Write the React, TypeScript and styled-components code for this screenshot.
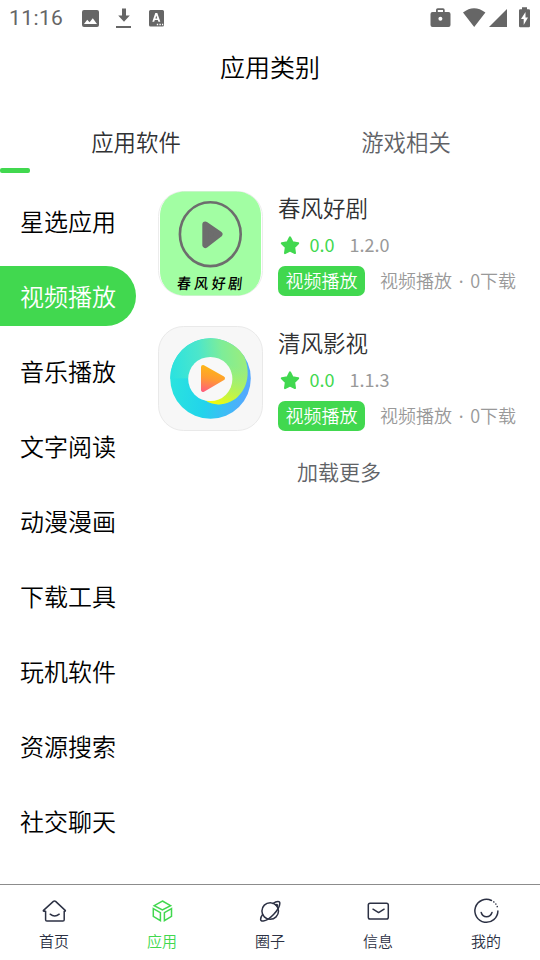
import React from "react";
import styled, { createGlobalStyle } from "styled-components";

const GREEN = "#41d84f";
const INK = "#2c3144";

const GlobalStyle = createGlobalStyle`
  * { box-sizing: border-box; }
  html, body { margin: 0; background: #fff; }
  body { font-family: "Noto Sans CJK SC", sans-serif; font-weight: 350; overflow: hidden; }
`;

const Screen = styled.div`
  width: 540px;
  height: 960px;
  display: flex;
  flex-direction: column;
  background: #fff;
  white-space: nowrap;
`;

const StatusBar = styled.header`
  height: 36px;
  flex: none;
  display: flex;
  align-items: center;
  justify-content: space-between;
  color: #666;
`;

const Clock = styled.span`
  width: 70px;
  padding-left: 9px;
  font: 400 21px/38px Roboto, sans-serif;
  letter-spacing: 0.4px;
`;

const StatusGroup = styled.div`
  display: flex;
  align-items: center;
`;

const StatusGlyphs = styled.svg`
  display: block;
  flex: none;
`;

const Title = styled.h1`
  margin: 0;
  height: 62px;
  flex: none;
  font-size: 25px;
  font-weight: 350;
  line-height: 61px;
  text-align: center;
  color: #000;
`;

const Tabs = styled.nav`
  height: 68px;
  margin-top: 10px;
  flex: none;
  display: grid;
  grid-template-columns: 1fr 1fr;
`;

const Tab = styled.div<{ $active?: boolean }>`
  padding-left: 2px;
  font-size: 22.4px;
  line-height: 67px;
  text-align: center;
  color: ${(p) => (p.$active ? "#303133" : "#606266")};
`;

const TabIndicator = styled.div`
  width: 30px;
  height: 5px;
  margin-top: -8px;
  flex: none;
  border-radius: 2px;
  background: ${GREEN};
`;

const Body = styled.main`
  flex: 1;
  min-height: 0;
  display: flex;
  padding-top: 18px;
`;

const Sidebar = styled.aside`
  width: 136px;
  flex: none;
  display: flex;
  flex-direction: column;
  gap: 15px;
`;

const Category = styled.div<{ $active?: boolean }>`
  height: 60px;
  padding-left: 20px;
  font-size: 24px;
  line-height: 59px;
  border-radius: 0 30px 30px 0;
  color: ${(p) => (p.$active ? "#fff" : "#000")};
  background: ${(p) => (p.$active ? GREEN : "transparent")};
`;

const AppList = styled.section`
  flex: 1;
  display: flex;
  flex-direction: column;
  gap: 30px;
  padding-left: 22px;
`;

const AppRow = styled.article`
  height: 105px;
  display: flex;
  gap: 15px;
`;

const AppIcon = styled.svg`
  width: 105px;
  height: 105px;
  flex: none;
`;

const Caption = styled.text`
  font-family: "Noto Sans CJK SC", sans-serif;
  font-size: 15px;
  font-weight: 500;
`;

const Info = styled.div`
  display: flex;
  flex-direction: column;
`;

const AppName = styled.div`
  height: 34px;
  font-size: 22.5px;
  line-height: 32px;
  color: #303133;
`;

const Rating = styled.div`
  height: 41px;
  display: flex;
  align-items: center;
  font-size: 18px;
  font-weight: 400;
  line-height: 39px;
`;

const Star = styled.svg`
  width: 24px;
  height: 24px;
`;

const Score = styled.span`
  height: 41px;
  margin-left: 7.5px;
  color: ${GREEN};
`;

const Version = styled.span`
  height: 41px;
  margin-left: 15px;
  color: #999;
`;

const Meta = styled.div`
  display: flex;
  align-items: center;
  gap: 15px;
  height: 30px;
  font-size: 18px;
  line-height: 29px;
  color: #999;
`;

const Tag = styled.span`
  height: 30px;
  width: 87px;
  text-align: center;
  border-radius: 7px;
  color: #fff;
  background: ${GREEN};
`;

const Dot = styled.span`
  padding: 0 2px;
  font-family: "Noto Sans", sans-serif;
  font-weight: 400;
`;

const LoadMore = styled.div`
  margin-left: -22px;
  width: 406px;
  height: 24px;
  font-size: 21px;
  line-height: 20px;
  text-align: center;
  color: #606266;
`;

const TabBar = styled.footer`
  height: 76px;
  flex: none;
  display: grid;
  grid-template-columns: repeat(5, 1fr);
  border-top: 1px solid #8c8c8c;
`;

const NavItem = styled.div<{ $active?: boolean }>`
  display: flex;
  flex-direction: column;
  align-items: center;
  padding-top: 11px;
  font-size: 15px;
  line-height: 30px;
  color: ${(p) => (p.$active ? GREEN : INK)};
`;

const NavIcon = styled.svg`
  width: 30px;
  height: 30px;
  fill: none;
  stroke: currentColor;
  stroke-width: 1.5;
  stroke-linecap: round;
  stroke-linejoin: round;
`;

const SpringIcon = () => (
  <AppIcon viewBox="0 0 105 105">
    <rect x="0.5" y="0.5" width="104" height="104" rx="25" fill="#fff" stroke="#ececec" />
    <path d="M27 0.5H78C92 0.5 103 10 103 25V80C103 95 92 104.5 78 104.5H27C13 104.5 2 95 2 80V25C2 10 13 0.5 27 0.5Z" fill="#a2fea3" />
    <ellipse cx="52.3" cy="43.2" rx="30.4" ry="31.9" fill="none" stroke="#6d6d6d" strokeWidth="2.6" />
    <path d="M47.3 33.4 61.5 43.2 47.3 54Z" fill="#6d6d6d" stroke="#6d6d6d" strokeWidth="6" strokeLinejoin="round" />
    <Caption transform="translate(18.5 98) skewX(-6) scale(0.93 1)" x="0 18.5 37.5 55" y="0 0 0 0">春风好剧</Caption>
  </AppIcon>
);

const BreezeIcon = () => (
  <AppIcon viewBox="0 0 105 105">
    <defs>
      <linearGradient id="ring" x1="0" y1="0.5" x2="1" y2="0.65">
        <stop offset="0" stopColor="#2ae4de" />
        <stop offset="0.45" stopColor="#22d4eb" />
        <stop offset="1" stopColor="#58a5ff" />
      </linearGradient>
      <linearGradient id="crest" x1="0" y1="0.6" x2="1" y2="0.5">
        <stop offset="0" stopColor="#2ae2e0" />
        <stop offset="0.4" stopColor="#4ce6cb" />
        <stop offset="0.7" stopColor="#7eed98" />
        <stop offset="1" stopColor="#9bed7c" />
      </linearGradient>
      <linearGradient id="lime" x1="0.6" y1="0" x2="0.3" y2="1">
        <stop offset="0.35" stopColor="#c0f34b" stopOpacity="0" />
        <stop offset="1" stopColor="#f2fb0b" />
      </linearGradient>
      <linearGradient id="play" gradientUnits="userSpaceOnUse" x1="54" y1="39" x2="48" y2="66">
        <stop offset="0" stopColor="#fdbb12" />
        <stop offset="0.5" stopColor="#ff9b32" />
        <stop offset="1" stopColor="#ff607c" />
      </linearGradient>
    </defs>
    <rect x="0.5" y="0.5" width="104" height="104" rx="25" fill="#f7f7f7" stroke="#e9e9e9" />
    <circle cx="52.5" cy="52.5" r="40.3" fill="url(#ring)" />
    <path d="M12.3 52.5A40.3 40.3 0 0 1 86 30C94 48 88 65 77 73C67 80 55 80 47 74L52 52Z" fill="url(#crest)" />
    <path d="M52.5 12.2C67 12.2 80 19 86 30C94 48 88 65 77 73C67 80 55 80 47 74L52 52Z" fill="url(#lime)" />
    <circle cx="52.3" cy="53" r="22.1" fill="#f8f8f8" />
    <path d="M45 41 65 52.2 45 64Z" fill="url(#play)" stroke="url(#play)" strokeWidth="4" strokeLinejoin="round" />
  </AppIcon>
);

const categories = ["星选应用", "视频播放", "音乐播放", "文字阅读", "动漫漫画", "下载工具", "玩机软件", "资源搜索", "社交聊天"];

const apps = [
  { name: "春风好剧", version: "1.2.0", icon: <SpringIcon /> },
  { name: "清风影视", version: "1.1.3", icon: <BreezeIcon /> },
];

const navItems = [
  {
    label: "首页",
    icon: <path d="M6.6 15.2H4.9C4.3 15.2 4.1 14.8 4.5 14.4L14.4 5.4Q15.5 4.5 16.6 5.4L26.2 14.4C26.6 14.8 26.4 15.2 25.8 15.2H25.2V23.8Q25.2 25.1 23.9 25.1H7.9Q6.6 25.1 6.6 23.8V15.2M11.2 18.2Q15.7 21.8 20.2 18.2" />,
  },
  {
    label: "应用",
    icon: <path strokeLinejoin="miter" d="M15.4 5 23.6 9.7 15.4 14 7.2 9.7ZM6.3 12.6 13.4 16.7V24.6L6.3 20.4ZM24.5 12.6 17.4 16.7V24.6L24.5 20.4Z" />,
  },
  {
    label: "圈子",
    icon: (
      <>
        <circle cx="15.2" cy="15" r="8.3" />
        <path d="M18 7.5C21.7 4.7 25.3 4.8 24.8 7.6C24.5 13.5 14.5 24.3 8.3 25C4.4 25.5 5.2 21.8 7.8 18.3M20.8 8.9C21.9 8.3 22.6 8.7 22.4 9.9" />
      </>
    ),
  },
  {
    label: "信息",
    icon: (
      <>
        <rect x="5.3" y="7.3" width="20" height="15.7" rx="1.8" />
        <path d="M10 13.2 15.6 16.6 21.1 13.2" />
      </>
    ),
  },
  {
    label: "我的",
    icon: (
      <>
        <path d="M20.5 4.5A11.5 11.5 0 1 0 26.9 15M10.2 16.5C11.8 22.1 19.2 22.1 21 16.5" />
        <path strokeDasharray="0.1 2.8" strokeLinecap="round" d="M22.8 5.9A11.5 11.5 0 0 1 26.9 12.8" />
      </>
    ),
  },
];

export default function App() {
  return (
    <>
      <GlobalStyle />
      <Screen>
        <StatusBar>
          <StatusGroup>
            <Clock>11:16</Clock>
            <StatusGlyphs width="100" height="36" viewBox="70 0 100 36" fill="#666">
              <path fillRule="evenodd" d="M84 10H97Q99 10 99 12V25Q99 27 97 27H84Q82 27 82 25V12Q82 10 84 10ZM84 24H97L92.8 18.3 89.6 22.3 87.2 19.7Z" />
              <path d="M122 8.5H126V15.5H129.8L124 21.8 118.2 15.5H122ZM116 26H131V28H116Z" />
              <path fillRule="evenodd" d="M150.5 10H162.5Q164 10 164 11.5V25Q164 26.5 162.5 26.5H150.5Q149 26.5 149 25V11.5Q149 10 150.5 10ZM155.3 13 152.3 21.8H154.2L154.8 20H157.8L158.4 21.8H160.3L157.3 13ZM155.4 18.4 156.3 15.5 157.2 18.4ZM156.8 23.8V25.2H158.2V23.8ZM159.4 23.8V25.2H160.8V23.8ZM162 23.8V25.2H163.2V23.8Z" />
            </StatusGlyphs>
          </StatusGroup>
          <StatusGlyphs width="120" height="36" viewBox="420 0 120 36" fill="#666">
            <path fillRule="evenodd" d="M436 12V10Q436 8.3 437.7 8.3H443Q444.7 8.3 444.7 10V12H448.5Q450.5 12 450.5 14V25Q450.5 27 448.5 27H432.5Q430.5 27 430.5 25V14Q430.5 12 432.5 12ZM437.8 12H443V10H437.8Z" />
            <circle cx="440.4" cy="18.7" r="2" fill="#fff" />
            <path d="M463 12.5Q474 4 485.4 12.5L474.2 27ZM507 9V27H489Z" />
            <path fillRule="evenodd" d="M522 7.2H527V9.2H528.8Q530 9.2 530 10.4V26Q530 27.2 528.8 27.2H520.2Q519 27.2 519 26V10.4Q519 9.2 520.2 9.2H522ZM525.5 12 521 19H523.7V25L528 17.4H525.5Z" />
          </StatusGlyphs>
        </StatusBar>
        <Title>应用类别</Title>
        <Tabs>
          <Tab $active>应用软件</Tab>
          <Tab>游戏相关</Tab>
        </Tabs>
        <TabIndicator />
        <Body>
          <Sidebar>
            {categories.map((c, i) => (
              <Category key={c} $active={i === 1}>{c}</Category>
            ))}
          </Sidebar>
          <AppList>
            {apps.map((app) => (
              <AppRow key={app.name}>
                {app.icon}
                <Info>
                  <AppName>{app.name}</AppName>
                  <Rating>
                    <Star viewBox="0 0 24 24">
                      <path d="M12 3.3 14.5 8.3 20.2 9.2 16.2 13.3 17 19.1 12 16.5 7 19.1 7.8 13.3 3.8 9.2 9.5 8.3Z" fill={GREEN} stroke={GREEN} strokeWidth="2" strokeLinejoin="round" />
                    </Star>
                    <Score>0.0</Score>
                    <Version>{app.version}</Version>
                  </Rating>
                  <Meta>
                    <Tag>视频播放</Tag>
                    <span>视频播放<Dot> · </Dot>0下载</span>
                  </Meta>
                </Info>
              </AppRow>
            ))}
            <LoadMore>加载更多</LoadMore>
          </AppList>
        </Body>
        <TabBar>
          {navItems.map((item, i) => (
            <NavItem key={item.label} $active={i === 1}>
              <NavIcon viewBox="0 0 30 30">{item.icon}</NavIcon>
              {item.label}
            </NavItem>
          ))}
        </TabBar>
      </Screen>
    </>
  );
}
